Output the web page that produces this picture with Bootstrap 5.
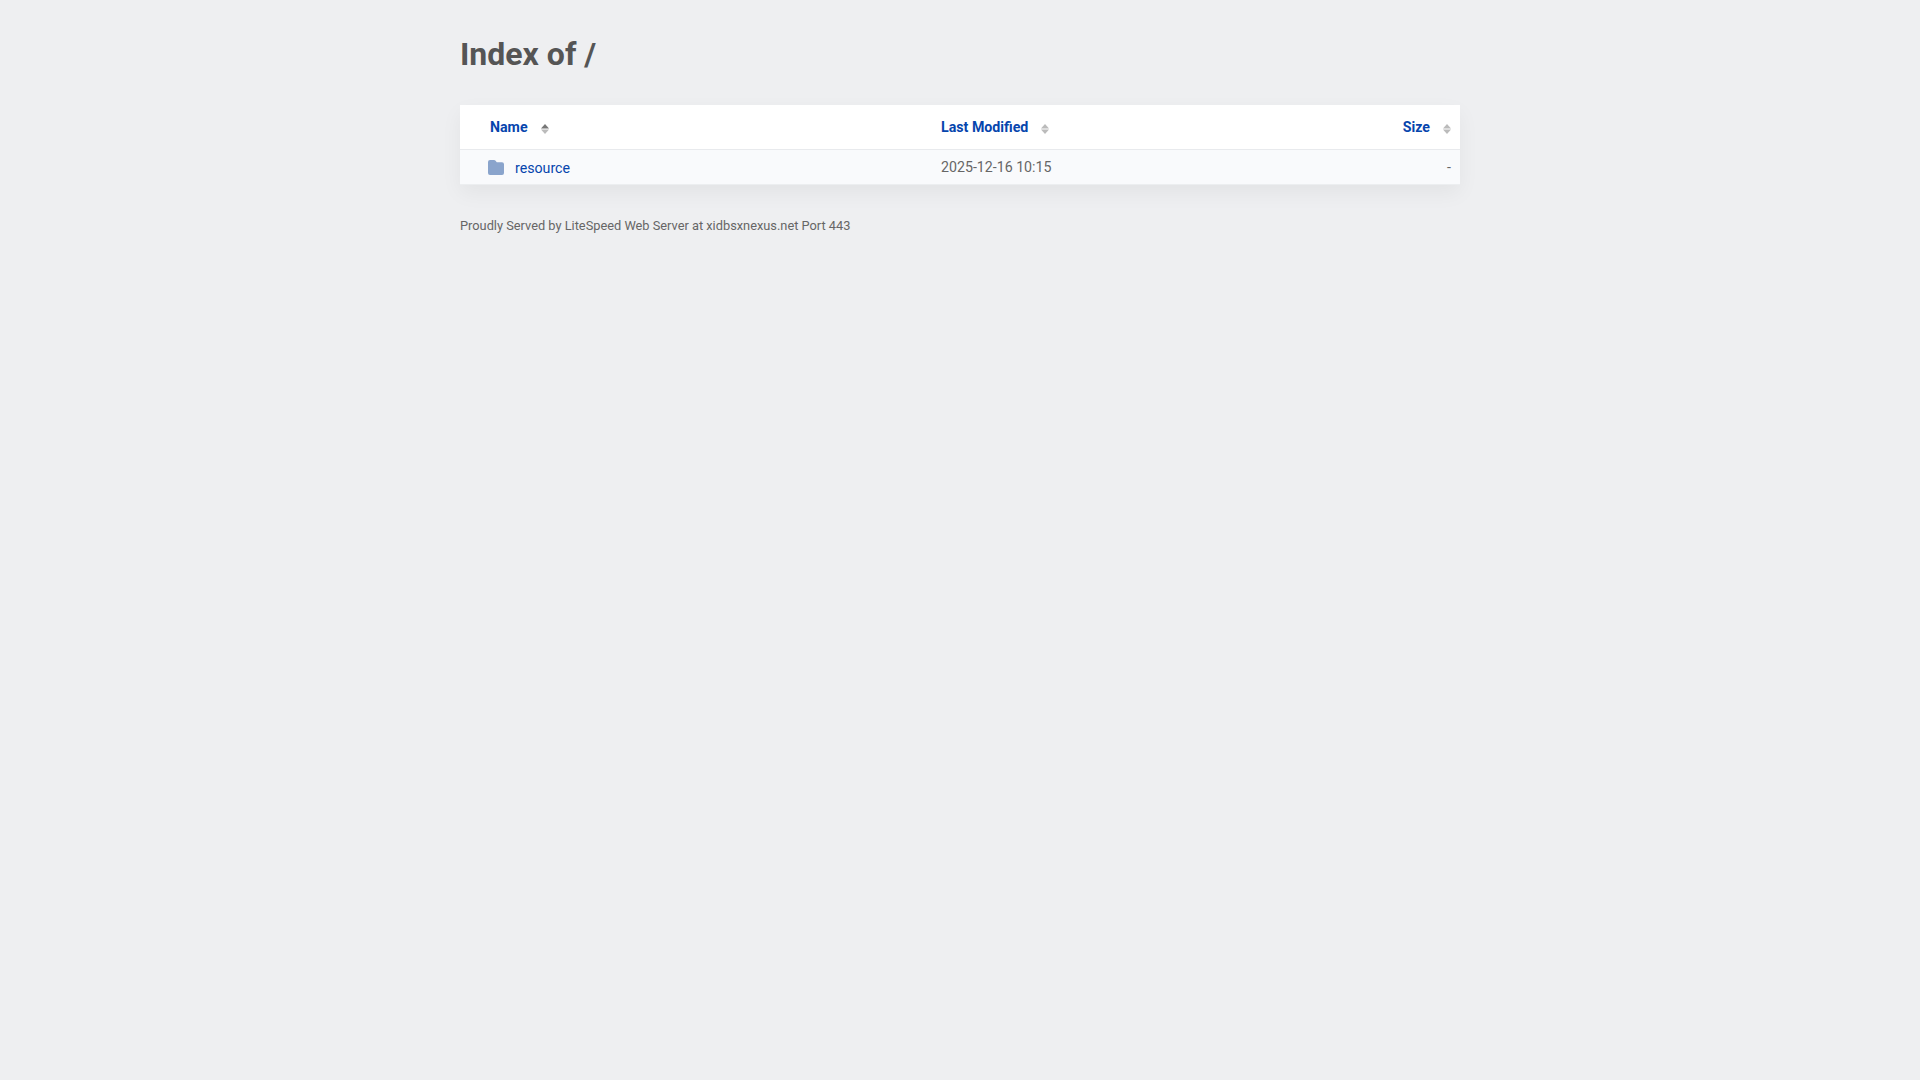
<!DOCTYPE html>
<html lang="en">
<head>
<meta charset="utf-8">
<title>Index of /</title>
<link href="https://cdn.jsdelivr.net/npm/bootstrap@5.3.0/dist/css/bootstrap.min.css" rel="stylesheet">
<style>
html,body{height:100%}
body{background:#eeeff1;font-family:Roboto,"Liberation Sans",sans-serif;color:#666;font-size:14.2px}
.wrap{width:1000px;margin:0 auto}
.ttl{font-family:Roboto,sans-serif;font-size:32px;font-weight:700;line-height:38px;color:#555;margin:0;padding:35px 0 32px}
.lst{background:#fff;box-shadow:0 8px 20px rgba(0,0,0,.05);font-size:14.2px}
.hdr{height:45px;padding-top:2px;border-bottom:1px solid #e8eaed;font-weight:700}
.rw{height:35px;padding-top:1px;background:#f9fafc;border-bottom:1px solid #eceef0}
.hdr a,.rw a{color:#0645ad;text-decoration:none}
.c1{width:481px;flex:none}
.c2{flex:1 1 auto}
.c3{width:120px;flex:none;text-align:right;padding-right:9px}
.hdr .c1{padding-left:30px}
.rw .c1{padding-left:28px}
.rw .c1 a{position:relative;top:1px}
.arr{width:8px;height:10px;margin-left:13px;vertical-align:-2px}
.fld{width:16px;height:15px;margin-right:11px;vertical-align:-2px}
.ft{font-size:12.8px;line-height:16px;color:#666;padding-top:33px}
</style>
</head>
<body>
<div class="wrap">
  <h1 class="ttl">Index of /</h1>
  <div class="lst">
    <div class="hdr d-flex align-items-center">
      <div class="c1"><a href="#">Name</a><svg class="arr" viewBox="0 0 8 10"><path d="M4 0 8 4.400H0z" fill="#777"/><path d="M4 10 0 5.600h8z" fill="#bbb"/></svg></div>
      <div class="c2"><a href="#">Last Modified</a><svg class="arr" viewBox="0 0 8 10"><path d="M4 0 8 4.400H0z" fill="#bbb"/><path d="M4 10 0 5.600h8z" fill="#bbb"/></svg></div>
      <div class="c3"><a href="#">Size</a><svg class="arr" viewBox="0 0 8 10"><path d="M4 0 8 4.400H0z" fill="#bbb"/><path d="M4 10 0 5.600h8z" fill="#bbb"/></svg></div>
    </div>
    <div class="rw d-flex align-items-center">
      <div class="c1"><a href="#"><svg class="fld" viewBox="0 0 16 15"><path d="M2 0H6Q7 0 7.600 .8L8.800 2.200H14A2 2 0 0 1 16 4.200V13A2 2 0 0 1 14 15H2A2 2 0 0 1 0 13V2A2 2 0 0 1 2 0z" fill="#8aa4cc"/></svg>resource</a></div>
      <div class="c2">2025-12-16 10:15</div>
      <div class="c3">-</div>
    </div>
  </div>
  <div class="ft">Proudly Served by LiteSpeed Web Server at xidbsxnexus.net Port 443</div>
</div>
<script src="https://cdn.jsdelivr.net/npm/bootstrap@5.3.0/dist/js/bootstrap.bundle.min.js"></script>
</body>
</html>
